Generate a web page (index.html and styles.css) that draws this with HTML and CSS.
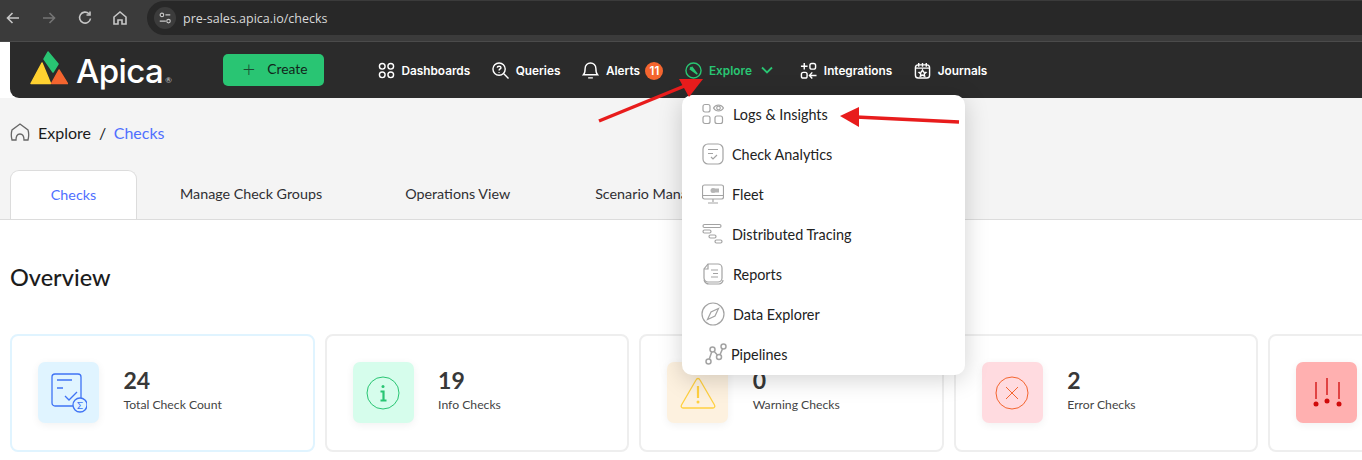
FILE: index.html
```html
<!DOCTYPE html>
<html>
<head>
    <title>Checks</title>
    <link rel="stylesheet" href="styles.css">
    <meta charset="UTF-8">
</head>
<body>
    <div class="browser-bar">
        <svg class="chrome-icon" viewBox="0 0 16 16"><path d="M14 8H3M7.500 3 2.500 8l5 5" /></svg>
        <svg class="chrome-icon dim" viewBox="0 0 16 16"><path d="M2 8h11M8.500 3l5 5-5 5" /></svg>
        <svg class="chrome-icon" viewBox="0 0 16 16"><path d="M13.500 8.500A5.500 5.500 0 1 1 12 3.800M13 1.500V5H9.500" /></svg>
        <svg class="chrome-icon" viewBox="0 0 16 16"><path d="M2 7 8 2l6 5v7h-4v-4H6v4H2Z" /></svg>
        <div class="address">
            <span class="site-info">
                <svg viewBox="0 0 16 16"><circle cx="4.500" cy="4.500" r="2" /><path d="M8.500 4.500H14M2 11.500h7" /><circle cx="12" cy="11.500" r="2" /></svg>
            </span>
            <span class="url">pre-sales.apica.io/checks</span>
        </div>
    </div>

    <header class="topbar">
        <div class="logo">
            <svg class="logo-mark" viewBox="0 0 38 34">
                <path d="M18 1 28 13 23 21 14 8Z" fill="#29c573" stroke="#29c573" />
                <path d="M12 12 20.500 32.500H1Z" fill="#ffd130" stroke="#ffd130" />
                <path d="M29 19 37.500 32.500H21.500Z" fill="#f4652f" stroke="#f4652f" />
            </svg>
            <span class="logo-text">Apica</span><span class="logo-reg">®</span>
        </div>
        <button class="create-btn"><span class="plus">+</span> Create</button>
        <nav class="nav">
            <a class="nav-item">
                <svg viewBox="0 0 18 18"><circle cx="4.500" cy="4.500" r="3" /><circle cx="13.500" cy="4.500" r="3" /><circle cx="4.500" cy="13.500" r="3" /><circle cx="13.500" cy="13.500" r="3" /></svg>
                Dashboards
            </a>
            <a class="nav-item">
                <svg viewBox="0 0 18 18"><circle cx="7.500" cy="7.500" r="6.500" /><path d="m12.500 12.500 5 5M5.500 6C5.700 4 9.500 4 9.500 6c0 1.300-2 1.400-2 3M7.500 10.500v.8" /></svg>
                Queries
            </a>
            <a class="nav-item alerts">
                <svg viewBox="0 0 18 18"><path d="M1.500 13.500C3 12 3.300 10 3.300 6.800a5.700 5.700 0 0 1 11.400 0c0 3.200.3 5.200 1.800 6.700ZM6.500 16.800h5" /></svg>
                Alerts
                <span class="badge">11</span>
            </a>
            <a class="nav-item active">
                <svg viewBox="0 0 18 18"><circle cx="9" cy="9" r="8" /><path d="m5.500 5.500 7 7M7 5l6 8-8-6" /></svg>
                Explore
                <svg class="chevron" viewBox="0 0 12 8"><path d="m1 1.500 5 5 5-5" /></svg>
            </a>
            <a class="nav-item">
                <svg viewBox="0 0 18 18"><path d="M4.500 1v7M1 4.500h7M13 11l-3 3.300 3 3.200M10 14.300h7.500" /><rect x="10.500" y="1.500" width="6" height="6" rx="2" /><rect x="1.500" y="11" width="6" height="6" rx="2" /></svg>
                Integrations
            </a>
            <a class="nav-item">
                <svg viewBox="0 0 18 18"><rect x="1.500" y="3" width="15" height="14" rx="3" /><path d="M5 1v4M9 1v4M13 1v4M1.500 6.500h15M9 8.500l1.200 2.200 2.300.3-1.700 1.600.5 2.400L9 13.800 6.700 15l.5-2.400L5.500 11l2.300-.3Z" /></svg>
                Journals
            </a>
        </nav>
    </header>

    <div class="crumbs">
        <svg class="crumb-home" viewBox="0 0 20 20"><path d="M2 18c-1-4-1-7 0-10l8-6 8 6c1 3 1 6 0 10h-4c0-4-1-6-4-6s-4 2-4 6Z" /></svg>
        <span>Explore</span>
        <span class="crumb-sep">/</span>
        <span class="crumb-current">Checks</span>
    </div>

    <div class="tabs">
        <div class="tab selected">Checks</div>
        <div class="tab groups">Manage Check Groups</div>
        <div class="tab ops">Operations View</div>
        <div class="tab">Scenario Management</div>
    </div>

    <main class="content">
        <h2 class="section-title">Overview</h2>
        <div class="cards">
            <div class="card total">
                <div class="tile tile-blue">
                    <svg viewBox="0 0 36 40"><path d="M22 33H4a3 3 0 0 1-3-3V4a3 3 0 0 1 3-3h23a3 3 0 0 1 3 3v21M6 7h15M6 15h6M14 23l4 4 8-8" /><circle cx="29" cy="32" r="7" fill="#e0f4ff" /><text x="29" y="35.500" class="sigma">Σ</text></svg>
                </div>
                <div class="card-text"><div class="card-num">24</div><div class="card-label">Total Check Count</div></div>
            </div>
            <div class="card">
                <div class="tile tile-green">
                    <svg viewBox="0 0 34 34"><circle cx="17" cy="17" r="16" /><circle cx="17" cy="10.500" r="1.500" class="fill" /><path d="M14.500 15.500H17.500V24M14.500 24.500h6" class="thick" /></svg>
                </div>
                <div class="card-text"><div class="card-num">19</div><div class="card-label">Info Checks</div></div>
            </div>
            <div class="card">
                <div class="tile tile-yellow">
                    <svg viewBox="0 0 36 32"><path d="M18 1.500c1 0 1.500.5 2 1.500l14.500 25c.8 1.500 0 3-1.500 3H3c-1.500 0-2.300-1.500-1.500-3L16 3c.5-1 1-1.500 2-1.500Z" /><path d="M18 9v12" class="thick" /><circle cx="18" cy="25" r="1.500" class="fill" /></svg>
                </div>
                <div class="card-text"><div class="card-num">0</div><div class="card-label">Warning Checks</div></div>
            </div>
            <div class="card">
                <div class="tile tile-red">
                    <svg viewBox="0 0 34 34"><circle cx="17" cy="17" r="16" /><path d="m11 11 12 12M23 11 11 23" /></svg>
                </div>
                <div class="card-text"><div class="card-num">2</div><div class="card-label">Error Checks</div></div>
            </div>
            <div class="card">
                <div class="tile tile-critical">
                    <svg viewBox="0 0 30 32"><path d="M4 5v17M15 1v17M27 5v17" /><circle cx="4" cy="27" r="2.500" class="fill" /><circle cx="15" cy="24" r="2.500" class="fill" /><circle cx="27" cy="27" r="2.500" class="fill" /></svg>
                </div>
            </div>
        </div>
    </main>

    <div class="menu">
        <a class="menu-item">
            <svg viewBox="0 0 22 22"><rect x="1" y="1.500" width="7" height="7.500" rx="2" /><rect x="1" y="13" width="7" height="7.500" rx="2" /><rect x="13" y="13" width="7.500" height="7.500" rx="2" /><path d="M11.500 5c2.500-4 7.500-4 10 0-2.500 4-7.500 4-10 0Z" /><circle cx="16.500" cy="5" r="1.800" /></svg>
            Logs &amp; Insights
        </a>
        <a class="menu-item shift">
            <svg viewBox="0 0 22 22"><rect x="1" y="1" width="20" height="20" rx="5" /><path d="M6 6.500h10M6 10.500h5M9 14l2 2 4-4" /></svg>
            Check Analytics
        </a>
        <a class="menu-item shift">
            <svg viewBox="0 0 22 22"><rect x="0.500" y="2" width="21" height="14" rx="2" /><path d="M0.500 12.500h21M11 16v3M6 20h10" /><rect x="12" y="5.500" width="5" height="4" class="fill" /><circle cx="11" cy="7.500" r="2.500" class="fill" /></svg>
            Fleet
        </a>
        <a class="menu-item shift">
            <svg viewBox="0 0 22 22"><rect x="1" y="1.500" width="18" height="3" rx="1.500" /><rect x="1" y="7" width="8" height="3" rx="1.500" /><rect x="7" y="12" width="7" height="3" rx="1.500" /><rect x="13" y="17" width="7" height="3" rx="1.500" /></svg>
            Distributed Tracing
        </a>
        <a class="menu-item">
            <svg viewBox="0 0 22 22"><path d="M6 1h10a4 4 0 0 1 4 4v10a4 4 0 0 1-4 4H6a4 4 0 0 1-4-4V6Z" /><path d="M6 1v5H2M2 17c1 3 3 4 5 4h10c2 0 4-2 4-4M9 7h7M11 10.500h5M9 14h7" /></svg>
            Reports
        </a>
        <a class="menu-item wide-icon">
            <svg viewBox="0 0 24 24"><circle cx="12" cy="12" r="11" /><path d="M17.500 6.500 14 14l-7.500 3.500L10 10Z" /></svg>
            Data Explorer
        </a>
        <a class="menu-item pipes">
            <svg viewBox="0 0 22 22"><circle cx="3.500" cy="18.500" r="2.500" /><circle cx="7.500" cy="6.500" r="2.500" /><circle cx="14" cy="14" r="2.500" /><circle cx="18.500" cy="3.500" r="2.500" /><path d="M4.300 16 6.700 9M9.200 8.500l3.200 3.500M15 11.700l2.500-5.800" /></svg>
            Pipelines
        </a>
    </div>

    <svg class="annotations" viewBox="0 0 1362 460">
        <path d="M599 121 687 85" class="arrow-line" />
        <path d="M703 79 679 79 689 97Z" class="arrow-head" />
        <path d="M959 122 856 117" class="arrow-line" />
        <path d="M840 116 859 107 859 127Z" class="arrow-head" />
    </svg>
</body>
</html>
```

FILE: styles.css
```css
* {
    box-sizing: border-box;
}
html, body {
    margin: 0;
    height: 460px;
    overflow: hidden;
}
body {
    position: relative;
    font-family: 'Lato', 'Noto Sans', sans-serif;
    background-color: #fff;
    color: #2f2f33;
}
svg {
    fill: none;
    stroke: currentColor;
    flex-shrink: 0;
}

/* browser chrome */
.browser-bar {
    height: 42px;
    background-color: #3b3b3b;
    border-bottom: 1px solid #4b4b4b;
    display: flex;
    align-items: flex-start;
    padding: 10px 0 0 5px;
    color: #c7c7c7;
}
.chrome-icon {
    width: 16px;
    height: 16px;
    stroke-width: 1.600;
    margin-right: 20px;
}
.chrome-icon:nth-child(3) {
    margin-right: 19px;
}
.chrome-icon.dim {
    color: #757575;
}
.address {
    flex: 1;
    height: 34px;
    margin: -9px 0 0 -1px;
    padding-left: 7px;
    background-color: #282828;
    border-radius: 17px 0 0 17px;
    display: flex;
    align-items: center;
}
.site-info {
    width: 22px;
    height: 22px;
    border-radius: 50%;
    background-color: #3c3c3c;
    display: flex;
    align-items: center;
    justify-content: center;
}
.site-info svg {
    width: 14px;
    height: 14px;
    stroke-width: 1.300;
}
.url {
    margin-left: 7px;
    font-family: 'Open Sans', sans-serif;
    font-size: 12.500px;
    color: #d8d8d8;
}

/* app header */
.topbar {
    height: 56px;
    margin-left: 10px;
    background-color: #2b2b2b;
    border-bottom-left-radius: 9px;
    display: flex;
    align-items: center;
    padding-left: 20px;
}
.logo {
    width: 193px;
    margin-top: -6px;
    display: flex;
    align-items: flex-end;
    color: #fff;
}
.logo-mark {
    width: 38px;
    height: 34px;
    stroke-linejoin: round;
    stroke-width: 1.500;
    margin-right: 8px;
    margin-top: 1px;
}
.logo-text {
    font-family: 'Inter', sans-serif;
    font-size: 33px;
    font-weight: 500;
    letter-spacing: -0.600px;
    line-height: 34px;
    position: relative;
    top: 3px;
}
.logo-reg {
    font-size: 8px;
    line-height: 10px;
    margin-left: 2px;
    color: #ccc;
}
.create-btn {
    width: 101px;
    height: 32px;
    background-color: #29c573;
    border: none;
    border-radius: 5px;
    color: #12241a;
    font-family: inherit;
    font-size: 13.800px;
    padding: 0 0 3px 3px;
    display: flex;
    align-items: center;
    justify-content: center;
    gap: 12px;
}
.plus {
    font-size: 22px;
    font-weight: 300;
    line-height: 20px;
    color: #1c4a32;
}
.nav {
    display: flex;
    align-items: center;
    gap: 22px;
    margin: 2px 0 0 54px;
    font-family: 'Inter', sans-serif;
    font-size: 11.800px;
    font-weight: 600;
    color: #fff;
}
.nav-item {
    display: flex;
    align-items: center;
    gap: 6.500px;
}
.nav-item svg {
    width: 17px;
    height: 17px;
    stroke-width: 1.500;
    position: relative;
    top: -1px;
}
.nav-item.active {
    color: #29c573;
    margin-right: 5px;
}
.nav-item .chevron {
    width: 12px;
    height: 8px;
    margin-left: 3px;
    stroke-width: 1.800;
}
.badge {
    width: 18px;
    height: 18px;
    border-radius: 50%;
    background-color: #f4652f;
    font-size: 11.500px;
    text-align: center;
    line-height: 18px;
    margin-left: -1px;
}

/* page head */
.crumbs {
    height: 72px;
    background-color: #f4f4f4;
    padding: 0 0 4px 10px;
    display: flex;
    align-items: center;
    font-size: 16px;
    color: #1c1c1c;
}
.crumb-home {
    width: 20px;
    height: 20px;
    color: #666;
    stroke-width: 1.300;
    margin-right: 8px;
}
.crumb-sep {
    margin: 0 7.500px 0 8px;
}
.crumb-current {
    color: #4f6fff;
}
.tabs {
    height: 50px;
    background-color: #f4f4f4;
    border-bottom: 1px solid #dcdcdc;
    padding-left: 10px;
    display: flex;
    font-size: 14.300px;
    color: #2f2f33;
    overflow: hidden;
}
.tab {
    height: 50px;
    line-height: 48px;
    padding: 0 43px;
    white-space: nowrap;
}
.tab.selected {
    width: 127px;
    padding: 0;
    text-align: center;
    background-color: #fff;
    border: 1px solid #dcdcdc;
    border-bottom: none;
    border-radius: 9px 9px 0 0;
    color: #4f6fff;
}
.tab.groups {
    padding-right: 40px;
}
.tab.ops {
    padding-right: 42px;
}

/* overview */
.content {
    padding: 0 0 0 10px;
}
.section-title {
    margin: 0;
    padding-top: 42px;
    font-size: 23.500px;
    font-weight: 500;
    line-height: 30px;
    color: #1c1c1c;
}
.cards {
    display: flex;
    gap: 10px;
    margin-top: 42px;
    overflow: hidden;
}
.card {
    width: 304.600px;
    height: 118px;
    flex-shrink: 0;
    background-color: #fff;
    border: 2px solid #eeeeee;
    border-radius: 8px;
    padding: 26px 0 0 26px;
    display: flex;
    gap: 24.500px;
}
.card.total {
    border-color: #e0f4ff;
}
.tile {
    width: 61px;
    height: 61px;
    border-radius: 7px;
    display: flex;
    align-items: center;
    justify-content: center;
    box-shadow: 0 2px 8px rgba(0, 0, 0, 0.06);
}
.tile .fill {
    fill: currentColor;
    stroke: none;
}
.tile .thick {
    stroke-width: 2.200;
}
.tile-blue {
    background-color: #e0f4ff;
    color: #3f73f5;
}
.tile-blue svg {
    width: 36px;
    height: 40px;
    stroke-width: 1.300;
}
.sigma {
    font-family: 'Lato', sans-serif;
    font-size: 10px;
    text-anchor: middle;
    fill: #3f73f5;
    stroke: none;
}
.tile-green {
    background-color: #d6fdec;
    color: #29c573;
}
.tile-green svg,
.tile-red svg {
    width: 34px;
    height: 34px;
    stroke-width: 1;
}
.tile-yellow {
    background-color: #fdf1df;
    color: #ffd040;
}
.tile-yellow svg {
    width: 36px;
    height: 32px;
    stroke-width: 1.300;
}
.tile-red {
    background-color: #ffdbe0;
    color: #f4652f;
}
.tile-critical {
    background-color: #ffb0b0;
    color: #d00a0a;
}
.tile-critical svg {
    width: 30px;
    height: 32px;
    stroke-width: 1.300;
}
.card-text {
    padding-top: 4px;
}
.card-num {
    font-size: 23px;
    font-weight: 700;
    line-height: 28px;
    color: #383838;
}
.card-label {
    font-size: 12.200px;
    line-height: 16px;
    margin-top: 3px;
    color: #444;
}

/* dropdown, lies over the page */
.menu {
    position: absolute;
    left: 682px;
    top: 95px;
    width: 283px;
    height: 280px;
    background-color: #fff;
    border-radius: 10px;
    box-shadow: 0 4px 24px rgba(0, 0, 0, 0.18);
    font-size: 14.400px;
    color: #222;
}
.menu-item {
    height: 40px;
    padding: 0 0 2px 20px;
    display: flex;
    align-items: center;
    gap: 9px;
}
.menu-item svg {
    width: 22px;
    height: 22px;
    color: #a3a3a3;
    stroke-width: 1.200;
}
.menu-item .fill {
    fill: #b5b5b5;
    stroke: none;
}
.menu-item.shift {
    gap: 8px;
}
.menu-item.wide-icon {
    padding-left: 19px;
    gap: 8px;
}
.menu-item.wide-icon svg {
    width: 24px;
    height: 24px;
}
.menu-item.pipes {
    padding-left: 23px;
    gap: 4px;
}
.menu-item.pipes svg {
    stroke-width: 1.500;
}

/* red arrows drawn on the screenshot */
.annotations {
    position: absolute;
    left: 0;
    top: 0;
    width: 1362px;
    height: 460px;
    pointer-events: none;
}
.arrow-line {
    stroke: #e81c1c;
    stroke-width: 3.500;
}
.arrow-head {
    fill: #e81c1c;
    stroke: none;
}
```
